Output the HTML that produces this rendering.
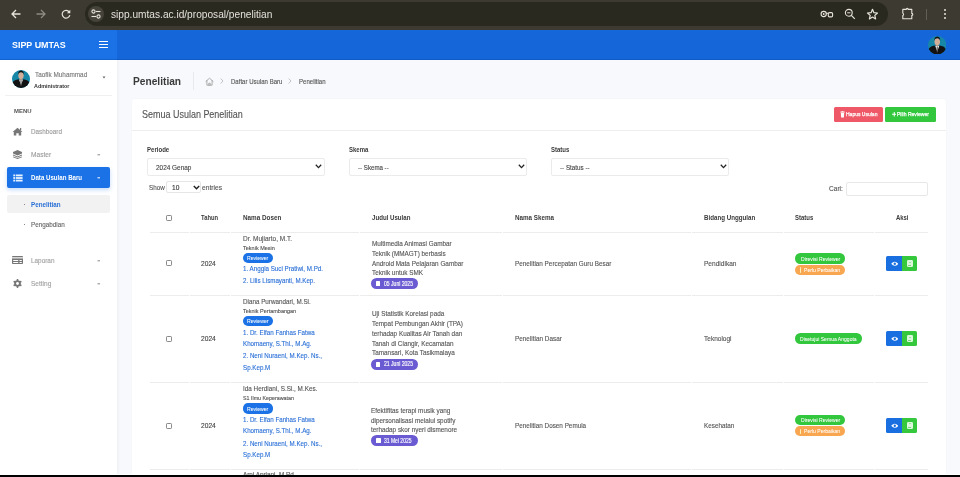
<!DOCTYPE html>
<html><head><meta charset="utf-8"><style>
html,body{margin:0;padding:0;width:960px;height:477px;overflow:hidden;background:#f7f9fc;}
body{position:relative;will-change:transform;font-family:"Liberation Sans", sans-serif;}
.t{position:absolute;white-space:nowrap;-webkit-text-stroke:0.12px currentColor;}
.r{position:absolute;display:block;}
</style></head><body>
<div class="r" style="left:0px;top:0px;width:960px;height:30px;background:#3c3a31;"></div>
<div class="r" style="left:85px;top:2px;width:803px;height:24px;background:#2a2920;border-radius:12px;"></div>
<div class="r" style="left:88px;top:6px;width:16px;height:16px;background:#45433a;border-radius:8px;"></div>
<svg class="r" style="left:90px;top:8px;" width="12" height="12" viewBox="0 0 12 12"><circle cx="3.5" cy="3.5" r="1.6" fill="none" stroke="#e6e3da" stroke-width="1.1"/><line x1="6" y1="3.5" x2="10.5" y2="3.5" stroke="#e6e3da" stroke-width="1.1"/><circle cx="8.5" cy="8.5" r="1.6" fill="none" stroke="#e6e3da" stroke-width="1.1"/><line x1="1.5" y1="8.5" x2="6" y2="8.5" stroke="#e6e3da" stroke-width="1.1"/></svg>
<svg class="r" style="left:10px;top:8px;" width="12" height="12" viewBox="0 0 12 12"><path d="M10.5 6H2M6 2L2 6L6 10" fill="none" stroke="#e6e3da" stroke-width="1.3"/></svg>
<svg class="r" style="left:35px;top:8px;" width="12" height="12" viewBox="0 0 12 12"><path d="M1.5 6H10M6 2L10 6L6 10" fill="none" stroke="#8d8a80" stroke-width="1.3"/></svg>
<svg class="r" style="left:60px;top:8px;" width="12" height="12" viewBox="0 0 12 12"><path d="M9.3 4A3.9 3.9 0 1 0 9.9 7.2" fill="none" stroke="#e6e3da" stroke-width="1.2"/><path d="M10.3 1.8V5.2H6.9Z" fill="#e6e3da"/></svg>
<div class="t" style="left:110.60px;top:10px;font-size:10.1px;line-height:10.1px;color:#e3e1da;font-weight:400;transform:scaleX(1.0051);transform-origin:0 0;-webkit-text-stroke:0;">sipp.umtas.ac.id/proposal/penelitian</div>
<svg class="r" style="left:820px;top:8px;" width="14" height="12" viewBox="0 0 14 12"><circle cx="3.7" cy="6" r="2.6" fill="none" stroke="#e6e3da" stroke-width="1.1"/><circle cx="3.7" cy="6" r="0.9" fill="#e6e3da"/><path d="M6.2 5.3H8" stroke="#e6e3da" stroke-width="1.1"/><rect x="8.3" y="4.6" width="4.3" height="4.3" rx="1.1" fill="none" stroke="#e6e3da" stroke-width="1.1"/><circle cx="10.4" cy="6.7" r="0.6" fill="#2a2920"/></svg>
<svg class="r" style="left:844px;top:8px;" width="12" height="12" viewBox="0 0 12 12"><circle cx="4.8" cy="4.8" r="3.4" fill="none" stroke="#e6e3da" stroke-width="1.1"/><line x1="3.2" y1="4.8" x2="6.4" y2="4.8" stroke="#e6e3da" stroke-width="1"/><line x1="7.3" y1="7.3" x2="10.8" y2="10.8" stroke="#e6e3da" stroke-width="1.2"/></svg>
<svg class="r" style="left:866px;top:8px;" width="13" height="12" viewBox="0 0 13 12"><path d="M6.5 1.3L7.9 4.7L11.5 5L8.8 7.4L9.6 10.9L6.5 9L3.4 10.9L4.2 7.4L1.5 5L5.1 4.7Z" fill="none" stroke="#e6e3da" stroke-width="1.2" stroke-linejoin="round"/></svg>
<svg class="r" style="left:901px;top:7px;" width="14" height="14" viewBox="0 0 14 14"><path d="M1.8 2.4H5.2A1 1 0 0 1 7.2 2.4H10.8V6.4A1 1 0 0 1 10.8 8.4V11.8H1.8V8.6A1.3 1.3 0 0 0 1.8 6.2Z" fill="none" stroke="#e6e3da" stroke-width="1.1" stroke-linejoin="round"/></svg>
<div class="r" style="left:926px;top:8.5px;width:1px;height:11px;background:#625e53;"></div>
<div class="r" style="left:944px;top:9px;width:2px;height:2px;border-radius:1px;background:#e6e3da"></div>
<div class="r" style="left:944px;top:13px;width:2px;height:2px;border-radius:1px;background:#e6e3da"></div>
<div class="r" style="left:944px;top:17px;width:2px;height:2px;border-radius:1px;background:#e6e3da"></div>
<div class="r" style="left:0px;top:30px;width:117px;height:30px;background:#1a72e6;"></div>
<div class="r" style="left:117px;top:30px;width:843px;height:30px;background:#1567d9;"></div>
<div class="r" style="left:0px;top:59px;width:960px;height:1px;background:rgba(0,40,120,0.18);"></div>
<div class="t" style="left:11.75px;top:40px;font-size:9.7px;line-height:9.7px;color:#ffffff;font-weight:700;transform:scaleX(0.9205);transform-origin:0 0;-webkit-text-stroke:0;">SIPP UMTAS</div>
<div class="r" style="left:99px;top:40.6px;width:9px;height:1.2px;background:#ffffff;"></div>
<div class="r" style="left:99px;top:43.8px;width:9px;height:1.2px;background:#ffffff;"></div>
<div class="r" style="left:99px;top:46.8px;width:9px;height:1.2px;background:#ffffff;"></div>
<svg class="r" style="left:927.75px;top:35.75px" width="18.5" height="18.5" viewBox="0 0 18 18"><defs><clipPath id="c937"><circle cx="9" cy="9" r="9"/></clipPath></defs><g clip-path="url(#c937)"><rect width="18" height="18" fill="#1787a8"/><path d="M0 18V13.8Q1.5 10.2 5.5 9.6L9 9.3L12.5 9.6Q16.5 10.2 18 13.8V18Z" fill="#121212"/><path d="M7 9.4L9 15.2L11 9.4Z" fill="#eeeeee"/><path d="M8.5 10.3H9.5L9.4 16H8.6Z" fill="#4a4a4a"/><rect x="7.9" y="7.6" width="2.2" height="2" fill="#c49a82"/><ellipse cx="9" cy="5.5" rx="2.7" ry="3.5" fill="#d2ae98"/><path d="M6.2 5.3Q5.8 0.7 9 0.5Q12.2 0.7 11.8 5.3Q11.6 2.5 9 2.3Q6.4 2.5 6.2 5.3Z" fill="#111"/></g></svg>
<div class="r" style="left:117px;top:60px;width:843px;height:417px;background:#f7f9fc;"></div>
<div class="r" style="left:0px;top:60px;width:117px;height:417px;background:#ffffff;box-shadow:1px 0 3px rgba(0,0,0,0.05);"></div>
<svg class="r" style="left:12.0px;top:69.5px" width="18" height="18" viewBox="0 0 18 18"><defs><clipPath id="c21"><circle cx="9" cy="9" r="9"/></clipPath></defs><g clip-path="url(#c21)"><rect width="18" height="18" fill="#1787a8"/><path d="M0 18V13.8Q1.5 10.2 5.5 9.6L9 9.3L12.5 9.6Q16.5 10.2 18 13.8V18Z" fill="#121212"/><path d="M7 9.4L9 15.2L11 9.4Z" fill="#eeeeee"/><path d="M8.5 10.3H9.5L9.4 16H8.6Z" fill="#4a4a4a"/><rect x="7.9" y="7.6" width="2.2" height="2" fill="#c49a82"/><ellipse cx="9" cy="5.5" rx="2.7" ry="3.5" fill="#d2ae98"/><path d="M6.2 5.3Q5.8 0.7 9 0.5Q12.2 0.7 11.8 5.3Q11.6 2.5 9 2.3Q6.4 2.5 6.2 5.3Z" fill="#111"/></g></svg>
<div class="t" style="left:34.70px;top:71px;font-size:7.2px;line-height:7.2px;color:#777777;font-weight:400;transform:scaleX(0.8891);transform-origin:0 0;">Taofik Muhammad</div>
<div class="t" style="left:34.25px;top:84px;font-size:5.6px;line-height:5.6px;color:#333333;font-weight:700;transform:scaleX(0.9642);transform-origin:0 0;-webkit-text-stroke:0;">Administrator</div>
<svg class="r" style="left:102px;top:76px;" width="4" height="3" viewBox="0 0 4 3"><path d="M0.5 0.5H3.5L2 2.5Z" fill="#666"/></svg>
<div class="r" style="left:5px;top:95.2px;width:107px;height:1px;background:#f0f0f0;"></div>
<div class="t" style="left:14.00px;top:108px;font-size:6.2px;line-height:6.2px;color:#555555;font-weight:700;transform:scaleX(0.9588);transform-origin:0 0;-webkit-text-stroke:0;">MENU</div>
<svg class="r" style="left:12px;top:127px;" width="11" height="9" viewBox="0 0 11 9"><path d="M5.5 0.8L0.6 5H1.8V8.6H4.3V6.3H6.7V8.6H9.2V5H10.4Z" fill="#777"/><rect x="8" y="1" width="1.2" height="2.6" fill="#777"/></svg>
<div class="t" style="left:30.80px;top:128px;font-size:7.4px;line-height:7.4px;color:#999999;font-weight:400;transform:scaleX(0.8563);transform-origin:0 0;">Dashboard</div>
<svg class="r" style="left:13px;top:149.6px;" width="9" height="9" viewBox="0 0 9 9"><path d="M4.5 0L9 2V3.5L4.5 5.5L0 3.5V2Z" fill="#777"/><path d="M0 4.5L4.5 6.4L9 4.5V5.6L4.5 7.5L0 5.6Z" fill="#777"/><path d="M0 6.5L4.5 8.1L9 6.5V7.3L4.5 9L0 7.3Z" fill="#777"/></svg>
<div class="t" style="left:30.80px;top:151px;font-size:7.4px;line-height:7.4px;color:#999999;font-weight:400;transform:scaleX(0.8932);transform-origin:0 0;">Master</div>
<svg class="r" style="left:97px;top:153.5px;" width="4" height="2" viewBox="0 0 4 2"><rect x="0.5" y="0.3" width="2.5" height="1" fill="#888"/></svg>
<div class="r" style="left:7px;top:167.3px;width:103px;height:20.6px;background:#1a72e6;border-radius:2px;box-shadow:0 2px 4px rgba(26,114,230,0.25);"></div>
<svg class="r" style="left:12.5px;top:173.5px;" width="10" height="8" viewBox="0 0 10 8"><rect x="0.3" y="0.5" width="2" height="1.8" fill="#e8f2ff"/><rect x="3" y="0.5" width="6.6" height="1.8" fill="#e8f2ff"/><rect x="0.3" y="3.1" width="2" height="1.8" fill="#e8f2ff"/><rect x="3" y="3.1" width="6.6" height="1.8" fill="#e8f2ff"/><rect x="0.3" y="5.7" width="2" height="1.8" fill="#e8f2ff"/><rect x="3" y="5.7" width="6.6" height="1.8" fill="#e8f2ff"/></svg>
<div class="t" style="left:30.80px;top:174px;font-size:7.0px;line-height:7.0px;color:#ffffff;font-weight:700;transform:scaleX(0.8758);transform-origin:0 0;-webkit-text-stroke:0;">Data Usulan Baru</div>
<svg class="r" style="left:97px;top:176.5px;" width="4" height="2" viewBox="0 0 4 2"><rect x="0.5" y="0.3" width="2.5" height="1" fill="#fff"/></svg>
<div class="r" style="left:7.4px;top:194.7px;width:103px;height:18.5px;background:#f2f2f2;border-radius:2px;"></div>
<div class="r" style="left:23.7px;top:203.5px;width:1.2px;height:1.2px;background:#888;"></div>
<div class="t" style="left:30.50px;top:201px;font-size:7.0px;line-height:7.0px;color:#2a6fd6;font-weight:700;transform:scaleX(0.8921);transform-origin:0 0;-webkit-text-stroke:0;">Penelitian</div>
<div class="r" style="left:23.7px;top:223.8px;width:1.2px;height:1.2px;background:#888;"></div>
<div class="t" style="left:30.50px;top:221px;font-size:7.0px;line-height:7.0px;color:#666666;font-weight:400;transform:scaleX(0.9019);transform-origin:0 0;">Pengabdian</div>
<svg class="r" style="left:12px;top:256px;" width="11" height="8" viewBox="0 0 11 8"><rect x="0" y="0" width="11" height="8" rx="0.8" fill="#777"/><rect x="0" y="1.3" width="11" height="1.1" fill="#fff"/><rect x="1.2" y="4" width="5" height="1" fill="#fff"/><rect x="7.5" y="4" width="2.3" height="1" fill="#fff"/><rect x="1.2" y="6" width="5" height="1" fill="#fff"/><rect x="7.5" y="6" width="2.3" height="1" fill="#fff"/></svg>
<div class="t" style="left:30.50px;top:257px;font-size:7.2px;line-height:7.2px;color:#a0a0a0;font-weight:400;transform:scaleX(0.8893);transform-origin:0 0;">Laporan</div>
<svg class="r" style="left:97px;top:259.5px;" width="4" height="2" viewBox="0 0 4 2"><rect x="0.5" y="0.3" width="2.5" height="1" fill="#888"/></svg>
<svg class="r" style="left:13px;top:279.3px;" width="9" height="9" viewBox="0 0 9 9"><g fill="#777"><circle cx="4.5" cy="4.5" r="3.3"/><rect x="3.7" y="0" width="1.6" height="9" rx="0.4"/><rect x="3.7" y="0" width="1.6" height="9" rx="0.4" transform="rotate(60 4.5 4.5)"/><rect x="3.7" y="0" width="1.6" height="9" rx="0.4" transform="rotate(120 4.5 4.5)"/></g><circle cx="4.5" cy="4.5" r="1.4" fill="#fff"/></svg>
<div class="t" style="left:30.50px;top:280px;font-size:7.2px;line-height:7.2px;color:#a0a0a0;font-weight:400;transform:scaleX(0.9057);transform-origin:0 0;">Setting</div>
<svg class="r" style="left:97px;top:282.5px;" width="4" height="2" viewBox="0 0 4 2"><rect x="0.5" y="0.3" width="2.5" height="1" fill="#888"/></svg>
<div class="t" style="left:132.60px;top:76px;font-size:11.0px;line-height:11.0px;color:#3a3a3a;font-weight:700;transform:scaleX(0.9256);transform-origin:0 0;-webkit-text-stroke:0;">Penelitian</div>
<div class="r" style="left:193px;top:71.5px;width:1px;height:18px;background:#e8e9ec;"></div>
<svg class="r" style="left:204.5px;top:76.5px;" width="9" height="9" viewBox="0 0 9 9"><path d="M0.9 4.4L4.5 1.2L8.1 4.4M1.9 3.6V8.2H7.1V3.6M3.8 8.2V6.2H5.2V8.2" fill="none" stroke="#9a9a9a" stroke-width="0.8" stroke-linejoin="round" stroke-linecap="round"/></svg>
<svg class="r" style="left:219.5px;top:78.2px;" width="4" height="6" viewBox="0 0 4 6"><path d="M0.7 0.5L3 3L0.7 5.5" fill="none" stroke="#aaa" stroke-width="0.7"/></svg>
<div class="t" style="left:230.50px;top:78px;font-size:7.0px;line-height:7.0px;color:#555;font-weight:400;transform:scaleX(0.8635);transform-origin:0 0;">Daftar Usulan Baru</div>
<svg class="r" style="left:288.2px;top:78.2px;" width="4" height="6" viewBox="0 0 4 6"><path d="M0.7 0.5L3 3L0.7 5.5" fill="none" stroke="#aaa" stroke-width="0.7"/></svg>
<div class="t" style="left:299.10px;top:78px;font-size:7.0px;line-height:7.0px;color:#555;font-weight:400;transform:scaleX(0.8652);transform-origin:0 0;">Penelitian</div>
<div class="r" style="left:132px;top:99px;width:814px;height:400px;background:#ffffff;border-radius:3px;box-shadow:0 0 2px rgba(0,0,0,0.04);"></div>
<div class="t" style="left:141.70px;top:110px;font-size:10.4px;line-height:10.4px;color:#555;font-weight:400;transform:scaleX(0.8640);transform-origin:0 0;">Semua Usulan Penelitian</div>
<div class="r" style="left:132px;top:130px;width:814px;height:1px;background:#eeeeee;"></div>
<div class="r" style="left:833.7px;top:107.3px;width:49.1px;height:14.3px;background:#ef5866;border-radius:1.5px;"></div>
<svg class="r" style="left:839.5px;top:110.8px;" width="5" height="7" viewBox="0 0 5 7"><rect x="0.3" y="0.6" width="4.4" height="0.9" fill="#fff"/><rect x="1.6" y="0" width="1.8" height="0.8" fill="#fff"/><path d="M0.8 1.8H4.2L3.9 6.6H1.1Z" fill="#fff"/></svg>
<div class="t" style="left:845.60px;top:111px;font-size:6.2px;line-height:6.2px;color:#ffffff;font-weight:400;transform:scaleX(0.8089);transform-origin:0 0;-webkit-text-stroke:0.25px #fff;">Hapus Usulan</div>
<div class="r" style="left:885px;top:107.3px;width:50.5px;height:14.3px;background:#33c73d;border-radius:1.5px;"></div>
<svg class="r" style="left:891.8px;top:112px;" width="4.5" height="4.5" viewBox="0 0 4.5 4.5"><path d="M1.75 0H2.75V1.75H4.5V2.75H2.75V4.5H1.75V2.75H0V1.75H1.75Z" fill="#fff"/></svg>
<div class="t" style="left:897.30px;top:111px;font-size:6.2px;line-height:6.2px;color:#ffffff;font-weight:400;transform:scaleX(0.8146);transform-origin:0 0;-webkit-text-stroke:0.25px #fff;">Pilih Reviewer</div>
<div class="t" style="left:146.50px;top:147px;font-size:6.9px;line-height:6.9px;color:#3a3a3a;font-weight:700;transform:scaleX(0.8791);transform-origin:0 0;-webkit-text-stroke:0;">Periode</div>
<div class="r" style="left:146.5px;top:158.3px;width:178px;height:17.3px;background:#ffffff;border:1px solid #ebebeb;border-radius:2px;box-sizing:border-box;"></div>
<div class="t" style="left:155.80px;top:165px;font-size:6.9px;line-height:6.9px;color:#444;font-weight:400;transform:scaleX(0.9333);transform-origin:0 0;">2024 Genap</div>
<svg class="r" style="left:315.0px;top:164.45000000000002px;" width="7" height="5" viewBox="0 0 7 5"><path d="M0.8 0.8L3.5 3.6L6.2 0.8" fill="none" stroke="#222" stroke-width="1.3"/></svg>
<div class="t" style="left:348.50px;top:147px;font-size:6.9px;line-height:6.9px;color:#3a3a3a;font-weight:700;transform:scaleX(0.8702);transform-origin:0 0;-webkit-text-stroke:0;">Skema</div>
<div class="r" style="left:348.5px;top:158.3px;width:178.5px;height:17.3px;background:#ffffff;border:1px solid #ebebeb;border-radius:2px;box-sizing:border-box;"></div>
<div class="t" style="left:358.00px;top:165px;font-size:6.9px;line-height:6.9px;color:#444;font-weight:400;transform:scaleX(0.8913);transform-origin:0 0;">-- Skema --</div>
<svg class="r" style="left:517.5px;top:164.45000000000002px;" width="7" height="5" viewBox="0 0 7 5"><path d="M0.8 0.8L3.5 3.6L6.2 0.8" fill="none" stroke="#222" stroke-width="1.3"/></svg>
<div class="t" style="left:550.80px;top:147px;font-size:6.9px;line-height:6.9px;color:#3a3a3a;font-weight:700;transform:scaleX(0.8726);transform-origin:0 0;-webkit-text-stroke:0;">Status</div>
<div class="r" style="left:550.8px;top:158.3px;width:178.4px;height:17.3px;background:#ffffff;border:1px solid #ebebeb;border-radius:2px;box-sizing:border-box;"></div>
<div class="t" style="left:560.40px;top:165px;font-size:6.9px;line-height:6.9px;color:#444;font-weight:400;transform:scaleX(0.9083);transform-origin:0 0;">-- Status --</div>
<svg class="r" style="left:719.6999999999999px;top:164.45000000000002px;" width="7" height="5" viewBox="0 0 7 5"><path d="M0.8 0.8L3.5 3.6L6.2 0.8" fill="none" stroke="#222" stroke-width="1.3"/></svg>
<div class="t" style="left:148.50px;top:185px;font-size:6.9px;line-height:6.9px;color:#555;font-weight:400;transform:scaleX(0.9087);transform-origin:0 0;">Show</div>
<div class="r" style="left:166.3px;top:181.3px;width:34.3px;height:12px;background:#ffffff;border:1px solid #e6e6e6;border-radius:2px;box-sizing:border-box;"></div>
<div class="t" style="left:172.00px;top:185px;font-size:6.6px;line-height:6.6px;color:#333;font-weight:400;">10</div>
<svg class="r" style="left:192.6px;top:185.2px;" width="7" height="5" viewBox="0 0 7 5"><path d="M0.8 0.9L3.5 3.8L6.2 0.9" fill="none" stroke="#222" stroke-width="1.4"/></svg>
<div class="t" style="left:202.00px;top:185px;font-size:6.9px;line-height:6.9px;color:#555;font-weight:400;transform:scaleX(0.9659);transform-origin:0 0;">entries</div>
<div class="t" style="left:828.80px;top:186px;font-size:6.9px;line-height:6.9px;color:#555;font-weight:400;transform:scaleX(0.9543);transform-origin:0 0;">Cari:</div>
<div class="r" style="left:846.4px;top:181.5px;width:82.1px;height:14.1px;background:#ffffff;border:1px solid #e8e8e8;border-radius:2px;box-sizing:border-box;"></div>
<div class="r" style="left:166px;top:214.5px;width:6px;height:6px;background:#fff;border:0.8px solid #8a8a8a;border-radius:1.2px;box-sizing:border-box;"></div>
<div class="t" style="left:201.00px;top:215px;font-size:6.9px;line-height:6.9px;color:#3a3a3a;font-weight:700;transform:scaleX(0.8473);transform-origin:0 0;-webkit-text-stroke:0;">Tahun</div>
<div class="t" style="left:242.60px;top:215px;font-size:6.9px;line-height:6.9px;color:#3a3a3a;font-weight:700;transform:scaleX(0.9187);transform-origin:0 0;-webkit-text-stroke:0;">Nama Dosen</div>
<div class="t" style="left:371.50px;top:215px;font-size:6.9px;line-height:6.9px;color:#3a3a3a;font-weight:700;transform:scaleX(0.8888);transform-origin:0 0;-webkit-text-stroke:0;">Judul Usulan</div>
<div class="t" style="left:514.60px;top:215px;font-size:6.9px;line-height:6.9px;color:#3a3a3a;font-weight:700;transform:scaleX(0.9115);transform-origin:0 0;-webkit-text-stroke:0;">Nama Skema</div>
<div class="t" style="left:703.75px;top:215px;font-size:6.9px;line-height:6.9px;color:#3a3a3a;font-weight:700;transform:scaleX(0.8974);transform-origin:0 0;-webkit-text-stroke:0;">Bidang Unggulan</div>
<div class="t" style="left:795.00px;top:215px;font-size:6.9px;line-height:6.9px;color:#3a3a3a;font-weight:700;transform:scaleX(0.8655);transform-origin:0 0;-webkit-text-stroke:0;">Status</div>
<div class="t" style="left:895.50px;top:215px;font-size:6.9px;line-height:6.9px;color:#3a3a3a;font-weight:700;transform:scaleX(0.8578);transform-origin:0 0;-webkit-text-stroke:0;">Aksi</div>
<div class="r" style="left:149.5px;top:231.8px;width:39px;height:1px;background:#ececec;"></div>
<div class="r" style="left:189.5px;top:231.8px;width:40px;height:1px;background:#ececec;"></div>
<div class="r" style="left:230.5px;top:231.8px;width:128px;height:1px;background:#ececec;"></div>
<div class="r" style="left:359.5px;top:231.8px;width:142px;height:1px;background:#ececec;"></div>
<div class="r" style="left:502.5px;top:231.8px;width:188.5px;height:1px;background:#ececec;"></div>
<div class="r" style="left:692.0px;top:231.8px;width:90.5px;height:1px;background:#ececec;"></div>
<div class="r" style="left:783.5px;top:231.8px;width:90px;height:1px;background:#ececec;"></div>
<div class="r" style="left:874.5px;top:231.8px;width:53px;height:1px;background:#ececec;"></div>
<div class="r" style="left:149.5px;top:295.2px;width:39px;height:1px;background:#ececec;"></div>
<div class="r" style="left:189.5px;top:295.2px;width:40px;height:1px;background:#ececec;"></div>
<div class="r" style="left:230.5px;top:295.2px;width:128px;height:1px;background:#ececec;"></div>
<div class="r" style="left:359.5px;top:295.2px;width:142px;height:1px;background:#ececec;"></div>
<div class="r" style="left:502.5px;top:295.2px;width:188.5px;height:1px;background:#ececec;"></div>
<div class="r" style="left:692.0px;top:295.2px;width:90.5px;height:1px;background:#ececec;"></div>
<div class="r" style="left:783.5px;top:295.2px;width:90px;height:1px;background:#ececec;"></div>
<div class="r" style="left:874.5px;top:295.2px;width:53px;height:1px;background:#ececec;"></div>
<div class="r" style="left:149.5px;top:382.2px;width:39px;height:1px;background:#ececec;"></div>
<div class="r" style="left:189.5px;top:382.2px;width:40px;height:1px;background:#ececec;"></div>
<div class="r" style="left:230.5px;top:382.2px;width:128px;height:1px;background:#ececec;"></div>
<div class="r" style="left:359.5px;top:382.2px;width:142px;height:1px;background:#ececec;"></div>
<div class="r" style="left:502.5px;top:382.2px;width:188.5px;height:1px;background:#ececec;"></div>
<div class="r" style="left:692.0px;top:382.2px;width:90.5px;height:1px;background:#ececec;"></div>
<div class="r" style="left:783.5px;top:382.2px;width:90px;height:1px;background:#ececec;"></div>
<div class="r" style="left:874.5px;top:382.2px;width:53px;height:1px;background:#ececec;"></div>
<div class="r" style="left:149.5px;top:469.1px;width:39px;height:1px;background:#ececec;"></div>
<div class="r" style="left:189.5px;top:469.1px;width:40px;height:1px;background:#ececec;"></div>
<div class="r" style="left:230.5px;top:469.1px;width:128px;height:1px;background:#ececec;"></div>
<div class="r" style="left:359.5px;top:469.1px;width:142px;height:1px;background:#ececec;"></div>
<div class="r" style="left:502.5px;top:469.1px;width:188.5px;height:1px;background:#ececec;"></div>
<div class="r" style="left:692.0px;top:469.1px;width:90.5px;height:1px;background:#ececec;"></div>
<div class="r" style="left:783.5px;top:469.1px;width:90px;height:1px;background:#ececec;"></div>
<div class="r" style="left:874.5px;top:469.1px;width:53px;height:1px;background:#ececec;"></div>
<div class="r" style="left:166px;top:260px;width:6px;height:6px;background:#fff;border:0.8px solid #8a8a8a;border-radius:1.2px;box-sizing:border-box;"></div>
<div class="t" style="left:201.00px;top:261px;font-size:6.65px;line-height:6.65px;color:#444;font-weight:400;">2024</div>
<div class="t" style="left:242.70px;top:236px;font-size:6.9px;line-height:6.9px;color:#555;font-weight:400;transform:scaleX(0.9416);transform-origin:0 0;">Dr. Mujiarto, M.T.</div>
<div class="t" style="left:242.70px;top:246px;font-size:5.8px;line-height:5.8px;color:#505050;font-weight:400;transform:scaleX(0.9516);transform-origin:0 0;">Teknik Mesin</div>
<div class="r" style="left:242.6px;top:253.1px;width:30.3px;height:10.2px;background:#1a72e6;border-radius:5.1px;"></div>
<div class="t" style="left:247.00px;top:256px;font-size:5.8px;line-height:5.8px;color:#fff;font-weight:400;transform:scaleX(0.8811);transform-origin:0 0;-webkit-text-stroke:0.05px #fff;">Reviewer</div>
<div class="t" style="left:242.70px;top:266px;font-size:6.9px;line-height:6.9px;color:#2a6fd6;font-weight:400;transform:scaleX(0.9042);transform-origin:0 0;">1. Anggia Suci Pratiwi, M.Pd.</div>
<div class="t" style="left:242.70px;top:278px;font-size:6.9px;line-height:6.9px;color:#2a6fd6;font-weight:400;transform:scaleX(0.9000);transform-origin:0 0;">2. Lilis Lismayanti, M.Kep.</div>
<div class="t" style="left:371.60px;top:241px;font-size:6.9px;line-height:6.9px;color:#555;font-weight:400;transform:scaleX(0.9250);transform-origin:0 0;">Multimedia Animasi Gambar</div>
<div class="t" style="left:371.60px;top:251px;font-size:6.9px;line-height:6.9px;color:#555;font-weight:400;transform:scaleX(0.9250);transform-origin:0 0;">Teknik (MMAGT) berbasis</div>
<div class="t" style="left:371.60px;top:261px;font-size:6.9px;line-height:6.9px;color:#555;font-weight:400;transform:scaleX(0.9250);transform-origin:0 0;">Android Mata Pelajaran Gambar</div>
<div class="t" style="left:371.60px;top:270px;font-size:6.9px;line-height:6.9px;color:#555;font-weight:400;transform:scaleX(0.9250);transform-origin:0 0;">Teknik untuk SMK</div>
<div class="r" style="left:371.2px;top:278.2px;width:46.6px;height:11px;background:#6b5bd2;border-radius:5.5px;"></div>
<div class="r" style="left:376.2px;top:281.2px;width:4.2px;height:5px;background:#ffffff;border-radius:0.6px;"></div>
<div class="t" style="left:383.80px;top:281px;font-size:6.6px;line-height:6.6px;color:#ffffff;font-weight:400;transform:scaleX(0.7672);transform-origin:0 0;-webkit-text-stroke:0.15px #fff;">05 Juni 2025</div>
<div class="t" style="left:514.50px;top:261px;font-size:6.9px;line-height:6.9px;color:#555;font-weight:400;transform:scaleX(0.9206);transform-origin:0 0;">Penelitian Percepatan Guru Besar</div>
<div class="t" style="left:703.80px;top:261px;font-size:6.9px;line-height:6.9px;color:#555;font-weight:400;transform:scaleX(0.9519);transform-origin:0 0;">Pendidikan</div>
<div class="r" style="left:795px;top:253.3px;width:49.8px;height:10.45px;background:#33c73d;border-radius:5.225px;"></div>
<div class="t" style="left:800.80px;top:257px;font-size:5.8px;line-height:5.8px;color:#fff;font-weight:400;transform:scaleX(0.8750);transform-origin:0 0;-webkit-text-stroke:0.05px #fff;">Direvisi Reviewer</div>
<div class="r" style="left:795px;top:265.0px;width:50.2px;height:9.8px;background:#f9a650;border-radius:4.9px;"></div>
<div class="r" style="left:799.7px;top:267.40000000000003px;width:1.6px;height:5.3px;background:#fff0b8;border-radius:0.5px;"></div>
<div class="t" style="left:804.20px;top:268px;font-size:5.8px;line-height:5.8px;color:#fff;font-weight:400;transform:scaleX(0.8772);transform-origin:0 0;-webkit-text-stroke:0.05px #fff;">Perlu Perbaikan</div>
<div class="r" style="left:886.3px;top:256.2px;width:15.8px;height:15.3px;background:#1a6fe0;border-radius:1.5px 0 0 1.5px;"></div>
<div class="r" style="left:902.1px;top:256.2px;width:14.6px;height:15.3px;background:#35c83d;border-radius:0 1.5px 1.5px 0;"></div>
<svg class="r" style="left:890.8px;top:261.09999999999997px;" width="7.6" height="5.6" viewBox="0 0 7.6 5.6"><path d="M0.2 2.8Q3.8 -1.2 7.4 2.8Q3.8 6.8 0.2 2.8Z" fill="#fff"/><circle cx="3.8" cy="2.8" r="1.2" fill="#1a6fe0"/></svg>
<div class="r" style="left:906.7px;top:260.29999999999995px;width:6.1px;height:6.8px;background:#dcf8dc;border-radius:1.2px;"></div>
<div class="r" style="left:908.2px;top:264.9px;width:3px;height:0.8px;background:#7ad67a;"></div>
<div class="r" style="left:908.7px;top:261.7px;width:2px;height:0.8px;background:#9ee09e;"></div>
<div class="r" style="left:166px;top:335.5px;width:6px;height:6px;background:#fff;border:0.8px solid #8a8a8a;border-radius:1.2px;box-sizing:border-box;"></div>
<div class="t" style="left:201.00px;top:336px;font-size:6.65px;line-height:6.65px;color:#444;font-weight:400;">2024</div>
<div class="t" style="left:242.80px;top:299px;font-size:6.9px;line-height:6.9px;color:#555;font-weight:400;transform:scaleX(0.9113);transform-origin:0 0;">Diana Purwandari, M.Si.</div>
<div class="t" style="left:242.80px;top:309px;font-size:5.8px;line-height:5.8px;color:#505050;font-weight:400;transform:scaleX(0.9483);transform-origin:0 0;">Teknik Pertambangan</div>
<div class="r" style="left:242.5px;top:316.0px;width:30.4px;height:10.4px;background:#1a72e6;border-radius:5.2px;"></div>
<div class="t" style="left:247.00px;top:319px;font-size:5.8px;line-height:5.8px;color:#fff;font-weight:400;transform:scaleX(0.8894);transform-origin:0 0;-webkit-text-stroke:0.05px #fff;">Reviewer</div>
<div class="t" style="left:242.80px;top:330px;font-size:6.9px;line-height:6.9px;color:#2a6fd6;font-weight:400;transform:scaleX(0.9000);transform-origin:0 0;">1. Dr. Elfan Fanhas Fatwa</div>
<div class="t" style="left:242.80px;top:341px;font-size:6.9px;line-height:6.9px;color:#2a6fd6;font-weight:400;transform:scaleX(0.9000);transform-origin:0 0;">Khomaeny, S.Thl., M.Ag.</div>
<div class="t" style="left:242.80px;top:353px;font-size:6.9px;line-height:6.9px;color:#2a6fd6;font-weight:400;transform:scaleX(0.9000);transform-origin:0 0;">2. Neni Nuraeni, M.Kep. Ns.,</div>
<div class="t" style="left:242.80px;top:365px;font-size:6.9px;line-height:6.9px;color:#2a6fd6;font-weight:400;transform:scaleX(0.9000);transform-origin:0 0;">Sp.Kep.M</div>
<div class="t" style="left:371.60px;top:311px;font-size:6.9px;line-height:6.9px;color:#555;font-weight:400;transform:scaleX(0.9250);transform-origin:0 0;">Uji Statistik Korelasi pada</div>
<div class="t" style="left:371.60px;top:321px;font-size:6.9px;line-height:6.9px;color:#555;font-weight:400;transform:scaleX(0.9250);transform-origin:0 0;">Tempat Pembungan Akhir (TPA)</div>
<div class="t" style="left:371.60px;top:331px;font-size:6.9px;line-height:6.9px;color:#555;font-weight:400;transform:scaleX(0.9250);transform-origin:0 0;">terhadap Kualitas Air Tanah dan</div>
<div class="t" style="left:371.60px;top:341px;font-size:6.9px;line-height:6.9px;color:#555;font-weight:400;transform:scaleX(0.9250);transform-origin:0 0;">Tanah di Ciangir, Kecamatan</div>
<div class="t" style="left:371.60px;top:350px;font-size:6.9px;line-height:6.9px;color:#555;font-weight:400;transform:scaleX(0.9250);transform-origin:0 0;">Tamansari, Kota Tasikmalaya</div>
<div class="r" style="left:371.3px;top:358.5px;width:46.6px;height:11px;background:#6b5bd2;border-radius:5.5px;"></div>
<div class="r" style="left:376.3px;top:361.5px;width:4.2px;height:5px;background:#ffffff;border-radius:0.6px;"></div>
<div class="t" style="left:383.90px;top:361px;font-size:6.6px;line-height:6.6px;color:#ffffff;font-weight:400;transform:scaleX(0.7672);transform-origin:0 0;-webkit-text-stroke:0.15px #fff;">21 Juni 2025</div>
<div class="t" style="left:514.90px;top:336px;font-size:6.9px;line-height:6.9px;color:#555;font-weight:400;transform:scaleX(0.9264);transform-origin:0 0;">Penelitian Dasar</div>
<div class="t" style="left:704.00px;top:336px;font-size:6.9px;line-height:6.9px;color:#555;font-weight:400;transform:scaleX(0.9467);transform-origin:0 0;">Teknologi</div>
<div class="r" style="left:795.2px;top:333.3px;width:66.6px;height:10.7px;background:#33c73d;border-radius:5.35px;"></div>
<div class="t" style="left:800.40px;top:337px;font-size:5.8px;line-height:5.8px;color:#fff;font-weight:400;transform:scaleX(0.8705);transform-origin:0 0;-webkit-text-stroke:0.05px #fff;">Disetujui Semua Anggota</div>
<div class="r" style="left:886.3px;top:331.1px;width:15.8px;height:15.3px;background:#1a6fe0;border-radius:1.5px 0 0 1.5px;"></div>
<div class="r" style="left:902.1px;top:331.1px;width:14.6px;height:15.3px;background:#35c83d;border-radius:0 1.5px 1.5px 0;"></div>
<svg class="r" style="left:890.8px;top:336.0px;" width="7.6" height="5.6" viewBox="0 0 7.6 5.6"><path d="M0.2 2.8Q3.8 -1.2 7.4 2.8Q3.8 6.8 0.2 2.8Z" fill="#fff"/><circle cx="3.8" cy="2.8" r="1.2" fill="#1a6fe0"/></svg>
<div class="r" style="left:906.7px;top:335.2px;width:6.1px;height:6.8px;background:#dcf8dc;border-radius:1.2px;"></div>
<div class="r" style="left:908.2px;top:339.8px;width:3px;height:0.8px;background:#7ad67a;"></div>
<div class="r" style="left:908.7px;top:336.6px;width:2px;height:0.8px;background:#9ee09e;"></div>
<div class="r" style="left:166px;top:423px;width:6px;height:6px;background:#fff;border:0.8px solid #8a8a8a;border-radius:1.2px;box-sizing:border-box;"></div>
<div class="t" style="left:201.00px;top:423px;font-size:6.65px;line-height:6.65px;color:#444;font-weight:400;">2024</div>
<div class="t" style="left:242.70px;top:386px;font-size:6.9px;line-height:6.9px;color:#555;font-weight:400;transform:scaleX(0.9200);transform-origin:0 0;">Ida Herdiani, S.Si., M.Kes.</div>
<div class="t" style="left:242.70px;top:396px;font-size:5.8px;line-height:5.8px;color:#505050;font-weight:400;transform:scaleX(0.9200);transform-origin:0 0;">S1 Ilmu Keperawatan</div>
<div class="r" style="left:242.6px;top:403.4px;width:30.3px;height:10.2px;background:#1a72e6;border-radius:5.1px;"></div>
<div class="t" style="left:247.00px;top:407px;font-size:5.8px;line-height:5.8px;color:#fff;font-weight:400;transform:scaleX(0.8811);transform-origin:0 0;-webkit-text-stroke:0.05px #fff;">Reviewer</div>
<div class="t" style="left:242.70px;top:417px;font-size:6.9px;line-height:6.9px;color:#2a6fd6;font-weight:400;transform:scaleX(0.9000);transform-origin:0 0;">1. Dr. Elfan Fanhas Fatwa</div>
<div class="t" style="left:242.70px;top:428px;font-size:6.9px;line-height:6.9px;color:#2a6fd6;font-weight:400;transform:scaleX(0.9000);transform-origin:0 0;">Khomaeny, S.Thl., M.Ag.</div>
<div class="t" style="left:242.70px;top:441px;font-size:6.9px;line-height:6.9px;color:#2a6fd6;font-weight:400;transform:scaleX(0.9000);transform-origin:0 0;">2. Neni Nuraeni, M.Kep. Ns.,</div>
<div class="t" style="left:242.70px;top:452px;font-size:6.9px;line-height:6.9px;color:#2a6fd6;font-weight:400;transform:scaleX(0.9000);transform-origin:0 0;">Sp.Kep.M</div>
<div class="t" style="left:371.40px;top:408px;font-size:6.9px;line-height:6.9px;color:#555;font-weight:400;transform:scaleX(0.9250);transform-origin:0 0;">Efektifitas terapi musik yang</div>
<div class="t" style="left:371.40px;top:418px;font-size:6.9px;line-height:6.9px;color:#555;font-weight:400;transform:scaleX(0.9250);transform-origin:0 0;">dipersonalisasi melalui spotify</div>
<div class="t" style="left:371.40px;top:427px;font-size:6.9px;line-height:6.9px;color:#555;font-weight:400;transform:scaleX(0.9250);transform-origin:0 0;">terhadap skor nyeri dismenore</div>
<div class="r" style="left:371.4px;top:435.3px;width:46.6px;height:11px;background:#6b5bd2;border-radius:5.5px;"></div>
<div class="r" style="left:376.4px;top:438.3px;width:4.2px;height:5px;background:#ffffff;border-radius:0.6px;"></div>
<div class="t" style="left:384.00px;top:438px;font-size:6.6px;line-height:6.6px;color:#ffffff;font-weight:400;transform:scaleX(0.7570);transform-origin:0 0;-webkit-text-stroke:0.15px #fff;">31 Mei 2025</div>
<div class="t" style="left:514.90px;top:423px;font-size:6.9px;line-height:6.9px;color:#555;font-weight:400;transform:scaleX(0.9189);transform-origin:0 0;">Penelitian Dosen Pemula</div>
<div class="t" style="left:704.00px;top:423px;font-size:6.9px;line-height:6.9px;color:#555;font-weight:400;transform:scaleX(0.9183);transform-origin:0 0;">Kesehatan</div>
<div class="r" style="left:795px;top:414.6px;width:49.8px;height:10.45px;background:#33c73d;border-radius:5.225px;"></div>
<div class="t" style="left:800.80px;top:418px;font-size:5.8px;line-height:5.8px;color:#fff;font-weight:400;transform:scaleX(0.8750);transform-origin:0 0;-webkit-text-stroke:0.05px #fff;">Direvisi Reviewer</div>
<div class="r" style="left:795px;top:426.3px;width:50.2px;height:9.8px;background:#f9a650;border-radius:4.9px;"></div>
<div class="r" style="left:799.7px;top:428.70000000000005px;width:1.6px;height:5.3px;background:#fff0b8;border-radius:0.5px;"></div>
<div class="t" style="left:804.20px;top:429px;font-size:5.8px;line-height:5.8px;color:#fff;font-weight:400;transform:scaleX(0.8772);transform-origin:0 0;-webkit-text-stroke:0.05px #fff;">Perlu Perbaikan</div>
<div class="r" style="left:886.3px;top:417.90000000000003px;width:15.8px;height:15.3px;background:#1a6fe0;border-radius:1.5px 0 0 1.5px;"></div>
<div class="r" style="left:902.1px;top:417.90000000000003px;width:14.6px;height:15.3px;background:#35c83d;border-radius:0 1.5px 1.5px 0;"></div>
<svg class="r" style="left:890.8px;top:422.8px;" width="7.6" height="5.6" viewBox="0 0 7.6 5.6"><path d="M0.2 2.8Q3.8 -1.2 7.4 2.8Q3.8 6.8 0.2 2.8Z" fill="#fff"/><circle cx="3.8" cy="2.8" r="1.2" fill="#1a6fe0"/></svg>
<div class="r" style="left:906.7px;top:422.0px;width:6.1px;height:6.8px;background:#dcf8dc;border-radius:1.2px;"></div>
<div class="r" style="left:908.2px;top:426.6px;width:3px;height:0.8px;background:#7ad67a;"></div>
<div class="r" style="left:908.7px;top:423.40000000000003px;width:2px;height:0.8px;background:#9ee09e;"></div>
<div class="r" style="left:0px;top:473.6px;width:960px;height:1.4px;background:#ffffff;"></div>
<div class="t" style="left:242.80px;top:472px;font-size:6.9px;line-height:6.9px;color:#555;font-weight:400;transform:scaleX(0.9200);transform-origin:0 0;">Arni Apriani, M.Pd.</div>
<div class="r" style="left:0px;top:475px;width:960px;height:2px;background:#000000;"></div>
</body></html>
